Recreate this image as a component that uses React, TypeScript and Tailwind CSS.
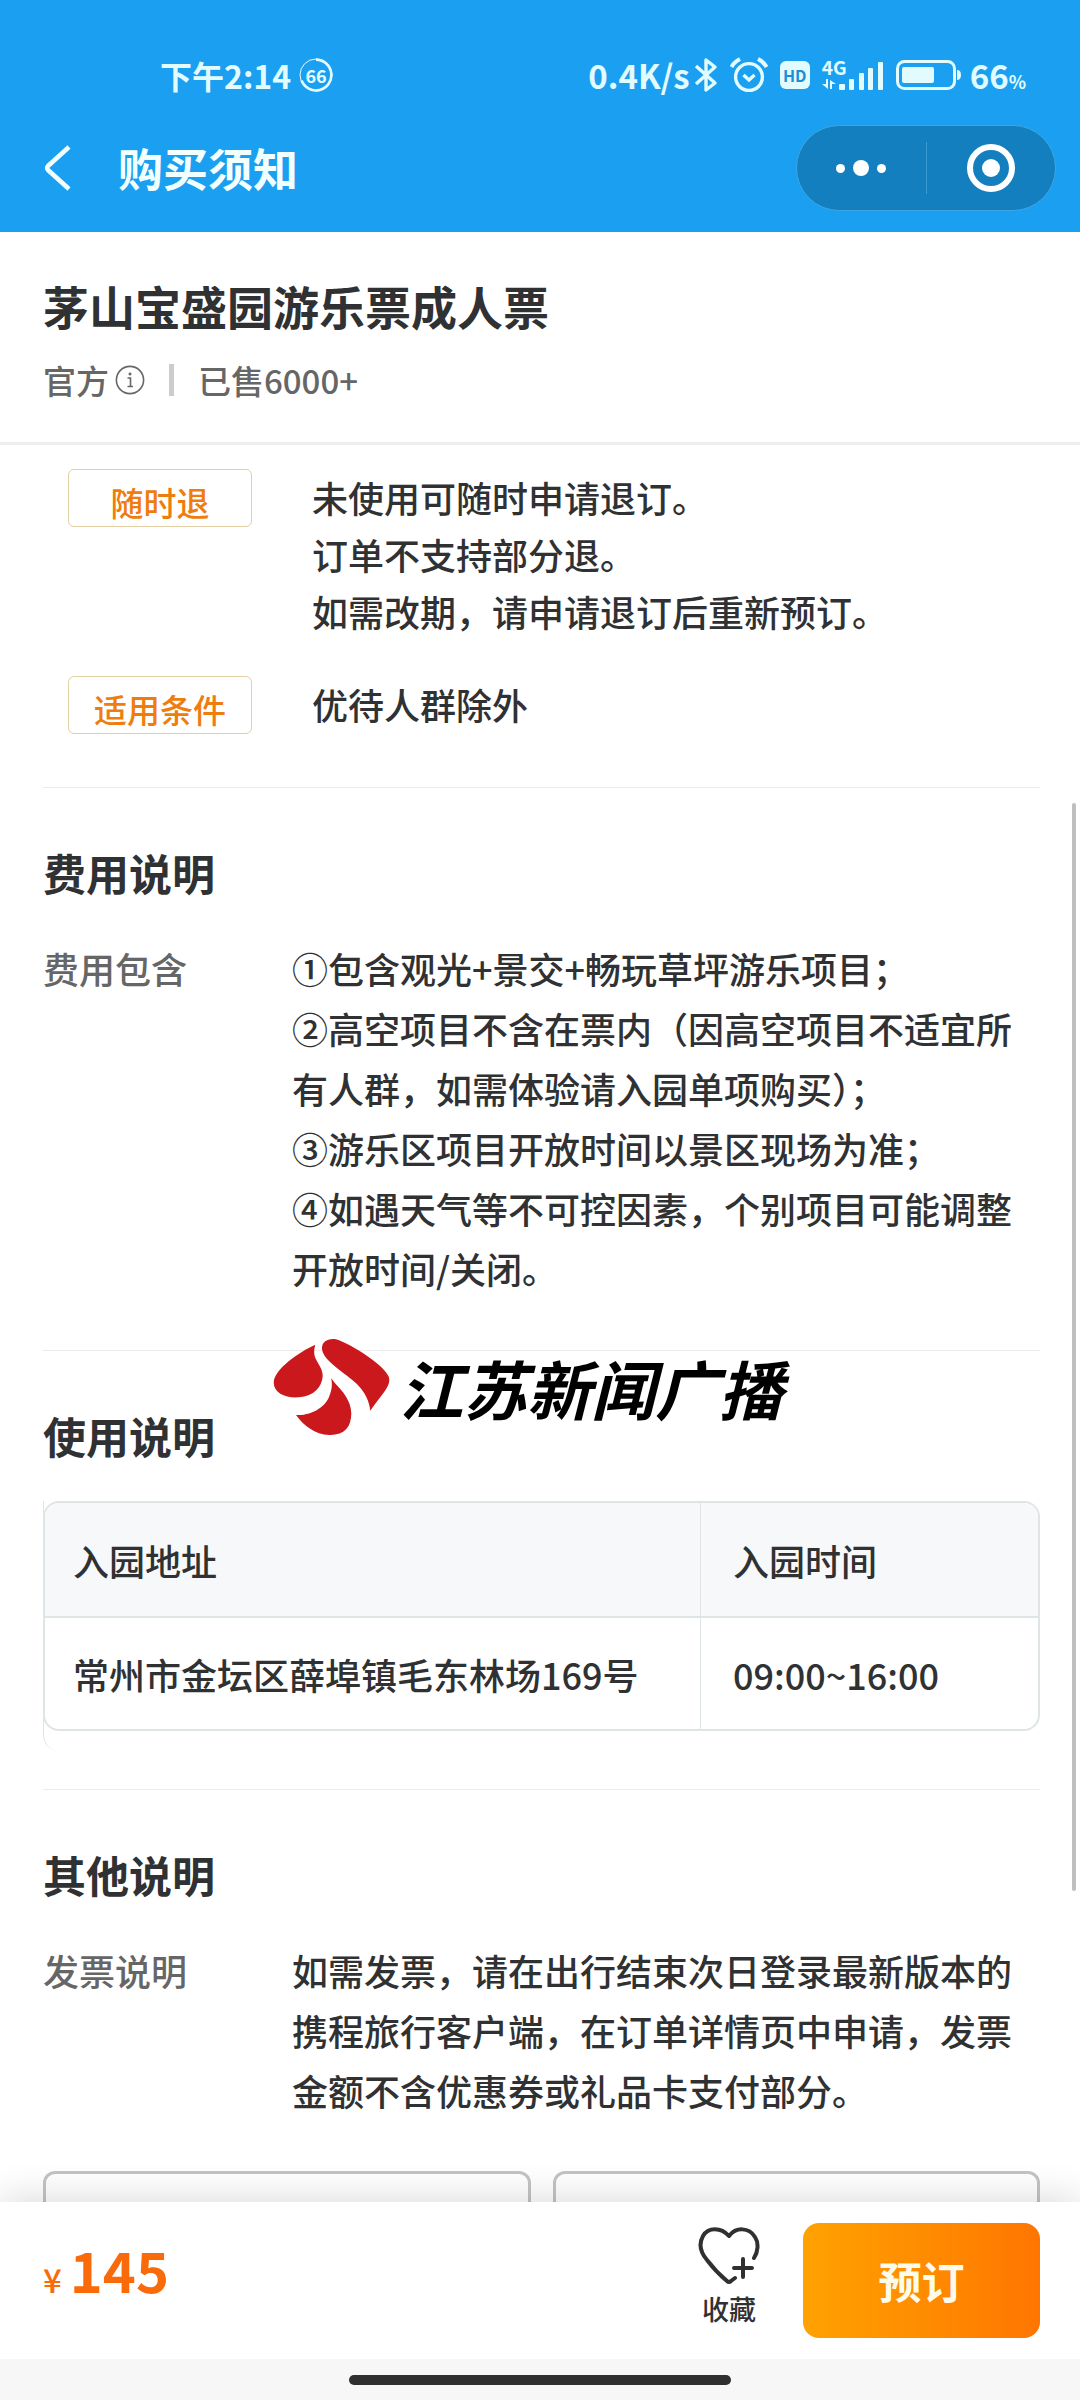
import type { ReactNode } from "react";

const refundRules = [
  {
    tag: "随时退",
    lines: ["未使用可随时申请退订。", "订单不支持部分退。", "如需改期，请申请退订后重新预订。"],
  },
  { tag: "适用条件", lines: ["优待人群除外"] },
];

const feeLines = [
  "①包含观光+景交+畅玩草坪游乐项目；",
  "②高空项目不含在票内（因高空项目不适宜所有人群，如需体验请入园单项购买）；",
  "③游乐区项目开放时间以景区现场为准；",
  "④如遇天气等不可控因素，个别项目可能调整开放时间/关闭。",
];

const invoiceLines = [
  "如需发票，请在出行结束次日登录最新版本的携程旅行客户端，在订单详情页中申请，发票金额不含优惠券或礼品卡支付部分。",
];

function StatusBar() {
  return (
    <div className="flex h-14 items-center justify-between pr-[54px] pl-40 text-[#e2fbff]">
      <div className="flex items-center gap-2 text-[32px] leading-none font-bold">
        <span>下午2:14</span>
        <span className="relative flex size-[34px] items-center justify-center text-[18px]">
          <svg viewBox="0 0 34 34" className="absolute inset-0" fill="none" stroke="currentColor">
            <circle cx="17" cy="17" r="16" strokeWidth="1" />
            <path d="M17 1.6A15.4 15.4 0 1 1 2.6 22.5" strokeWidth="2.6" />
          </svg>
          66
        </span>
      </div>

      <div className="flex items-center text-[33px] leading-none font-bold">
        <span>0.4K/s</span>
        <svg viewBox="0 0 24 36" className="ml-1 h-9 w-6" fill="none" stroke="currentColor" strokeWidth="3.4">
          <path d="M2 9 21 26 12 33V3L21 10 2 27" strokeLinejoin="round" />
        </svg>
        <svg viewBox="0 0 38 36" className="ml-3 h-9 w-[38px]" fill="none" stroke="currentColor" strokeWidth="3.4">
          <circle cx="19" cy="20" r="13.4" />
          <path d="M1.5 10Q4 5 10 2M36.5 10Q34 5 28 2" strokeWidth="4" />
          <path d="M13.5 18 19 23 24.5 18" />
        </svg>
        <span className="ml-3 flex h-7 w-[30px] items-center justify-center rounded-md bg-[#e2fbff] text-[16px] font-bold text-[#1b8fd8]">
          HD
        </span>
        <span className="relative ml-3 block h-9 w-[62px]">
          <span className="absolute top-0 left-0 text-[19px] leading-[19px]">4G</span>
          <svg viewBox="0 0 62 36" className="absolute inset-0" fill="currentColor">
            <rect x="17" y="27" width="6" height="6" rx="1" />
            <rect x="27" y="22" width="5" height="11" rx="1" />
            <rect x="37" y="16" width="5" height="17" rx="1" />
            <rect x="46" y="11" width="5" height="22" rx="1" />
            <rect x="56" y="5" width="5" height="28" rx="1" />
            <path d="M4 22h2v10L0 27h4zM8 23l6 4h-4v5H8z" />
          </svg>
        </span>
        <svg viewBox="0 0 66 30" className="ml-3 h-[30px] w-[66px]">
          <rect x="1.5" y="1.5" width="57" height="27" rx="7" fill="none" stroke="currentColor" strokeWidth="3" />
          <rect x="6" y="7" width="32" height="16" rx="2" fill="currentColor" />
          <path d="M61 10q4 0 4 5t-4 5z" fill="currentColor" />
        </svg>
        <span className="ml-2">
          66<span className="text-[18px]">%</span>
        </span>
      </div>
    </div>
  );
}

function NavBar() {
  return (
    <div className="mt-[22px] flex h-[86px] items-center pr-6 pl-[44px]">
      <button type="button" aria-label="返回" className="mr-[46px]">
        <svg viewBox="0 0 28 46" className="h-[46px] w-7" fill="none" stroke="#f2ffff" strokeWidth="4.5">
          <path d="M25 2 4 21Q2 23 4 25L25 44" />
        </svg>
      </button>
      <h1 className="flex-1 text-[45px] leading-[60px] font-bold text-[#f2ffff]">购买须知</h1>
      <div className="flex h-[86px] w-[260px] items-center rounded-full border border-[#3ea5e2] bg-[#147fbf]">
        <button type="button" aria-label="更多" className="flex h-full flex-1 items-center justify-center gap-2">
          <span className="size-[9px] rounded-full bg-white" />
          <span className="size-4 rounded-full bg-white" />
          <span className="size-[9px] rounded-full bg-white" />
        </button>
        <span className="h-[52px] w-px bg-[#3d9bd3]" />
        <button type="button" aria-label="关闭" className="flex h-full flex-1 items-center justify-center">
          <span className="flex size-12 items-center justify-center rounded-full border-[6px] border-white">
            <span className="size-[18px] rounded-full bg-white" />
          </span>
        </button>
      </div>
    </div>
  );
}

function Section({ title, children }: { title: string; children: ReactNode }) {
  return (
    <section className="border-t border-[#ececec] pt-[54px]">
      <h3 className="mb-9 text-[43px] leading-[60px] font-bold">{title}</h3>
      {children}
    </section>
  );
}

function DetailRow({ label, lines }: { label: string; lines: string[] }) {
  return (
    <div className="flex text-[36px] leading-[60px] font-medium">
      <div className="w-[249px] shrink-0 text-[#666]">{label}</div>
      <div className="flex-1">
        {lines.map((line) => (
          <p key={line}>{line}</p>
        ))}
      </div>
    </div>
  );
}

function RadioLogo() {
  return (
    <div className="absolute -top-3 left-[230px] flex items-center">
      <svg viewBox="90 52 318 294" preserveAspectRatio="none" className="h-[98px] w-[118px]" fill="#cb181d">
        <path d="M204 72C160 94 92 146 92 186C92 217 124 233 160 230C201 226 222 199 224 166C224 136 201 120 201 96C201 86 202 80 204 72Z" />
        <path d="M222 84C221 65 235 53 256 55C284 59 388 130 402 168C410 196 384 220 352 270C350 243 339 216 316 190C288 158 224 121 222 84Z" />
        <path d="M247 173C262 198 300 228 301 278C301 320 282 344 242 343C202 341 174 316 152 283C196 286 233 256 242 226C249 206 250 194 247 173Z" />
      </svg>
      <span className="ml-2 text-[64px] leading-[80px] font-bold text-black italic">江苏新闻广播</span>
    </div>
  );
}

function AdmissionTable() {
  return (
    <div className="rounded-bl-2xl border-l border-[#dfe5e6] pb-5">
      <div className="-ml-px overflow-hidden rounded-2xl border-2 border-[#dfe5e6]">
        <table className="w-full text-left text-[36px] leading-[60px]">
          <thead className="bg-[#f7f8fa]">
            <tr className="h-[114px] border-b-2 border-[#dfe5e6]">
              <th className="w-[66%] border-r border-[#dfe5e6] pl-7 font-medium">入园地址</th>
              <th className="pl-8 font-medium">入园时间</th>
            </tr>
          </thead>
          <tbody>
            <tr className="h-[112px]">
              <td className="border-r border-[#dfe5e6] pl-7 font-medium">常州市金坛区薛埠镇毛东林场169号</td>
              <td className="pl-8 font-medium">09:00~16:00</td>
            </tr>
          </tbody>
        </table>
      </div>
    </div>
  );
}

function BookingBar() {
  return (
    <footer className="relative bg-white shadow-[0_-4px_36px_rgba(0,0,0,0.14)]">
      <div className="flex h-[157px] items-center pr-10 pl-[43px]">
        <div className="flex flex-1 items-baseline gap-2 pb-6 text-[#f96a0a]">
          <span className="text-[33px] leading-none font-medium">¥</span>
          <span className="text-[56px] leading-none font-bold">145</span>
        </div>
        <button type="button" className="mr-[43px] flex flex-col items-center gap-2 pb-[10px]">
          <svg
            viewBox="0 0 62 58"
            className="h-[58px] w-[62px]"
            fill="none"
            stroke="#303030"
            strokeWidth="4"
            strokeLinecap="round"
            strokeLinejoin="round"
          >
            <path d="M56 31C60 25 61 16 57 10C51 0 38 0 31 9C23 0 10 0 5 9C0 18 3 26 9 33C15 41 23 49 29 54Q31 56 33 54L37 51" />
            <path d="M45 32V50M36 41H54" />
          </svg>
          <span className="text-[27px] leading-8 font-medium">收藏</span>
        </button>
        <button
          type="button"
          className="h-[115px] w-[237px] rounded-2xl bg-linear-to-r from-[#ffa200] to-[#ff7500] text-[43px] font-bold text-[#fffbea]"
        >
          预订
        </button>
      </div>
      <div className="flex h-[41px] items-center justify-center bg-[#f7f7f7]">
        <span className="h-[10px] w-[382px] rounded-full bg-[#303030]" />
      </div>
    </footer>
  );
}

export default function App() {
  return (
    <div className="flex h-screen flex-col bg-white font-['Noto_Sans_CJK_SC',sans-serif] text-[#303133]">
      <header className="bg-[#1ba0f1] pt-[47px] pb-[21px]">
        <StatusBar />
        <NavBar />
      </header>

      <div className="border-b-3 border-[#eee] px-[43px] pt-[43px] pb-[38px]">
        <h2 className="text-[46px] leading-[60px] font-bold">茅山宝盛园游乐票成人票</h2>
        <div className="mt-[21px] flex h-12 items-center text-[33px] leading-[48px] font-medium text-[#666]">
          <span>官方</span>
          <svg viewBox="0 0 30 30" className="ml-[6px] size-[30px]" fill="none" stroke="#666" strokeWidth="1.6">
            <circle cx="15" cy="15" r="13.6" />
            <path d="M12.5 13H15.5V21M12.5 21.5H18" />
            <circle cx="15" cy="9" r="1.2" fill="#666" strokeWidth="0.6" />
          </svg>
          <span className="mx-6 h-8 w-[5px] bg-[#ccc]" />
          <span>已售6000+</span>
        </div>
      </div>

      <div className="relative min-h-0 flex-1">
        <main className="h-full overflow-y-auto pr-10 pl-[43px] [scrollbar-width:none]">
          <div className="flex flex-col gap-9 pt-6 pb-[53px] pl-[25px]">
            {refundRules.map((rule) => (
              <div key={rule.tag} className="flex items-start gap-[60px]">
                <span className="flex h-[58px] w-[184px] items-center justify-center rounded-md border border-[#e3cfa4] pt-2 text-[33px] leading-none font-medium text-[#ee7d0e]">
                  {rule.tag}
                </span>
                <div className="flex-1 text-[36px] leading-[57px] font-medium">
                  {rule.lines.map((line) => (
                    <p key={line}>{line}</p>
                  ))}
                </div>
              </div>
            ))}
          </div>

          <Section title="费用说明">
            <DetailRow label="费用包含" lines={feeLines} />
          </Section>

          <div className="relative mt-[52px] pb-[38px]">
            <Section title="使用说明">
              <AdmissionTable />
            </Section>
            <RadioLogo />
          </div>

          <Section title="其他说明">
            <DetailRow label="发票说明" lines={invoiceLines} />
            <div className="mt-[51px] grid grid-cols-2 gap-[22px]">
              <div className="h-24 rounded-xl border-3 border-[#c4c4c4]" />
              <div className="h-24 rounded-xl border-3 border-[#c4c4c4]" />
            </div>
          </Section>
        </main>
        <span className="absolute top-[358px] right-1 h-[1088px] w-1 rounded-full bg-[#bfbfbf]" />
      </div>

      <BookingBar />
    </div>
  );
}
